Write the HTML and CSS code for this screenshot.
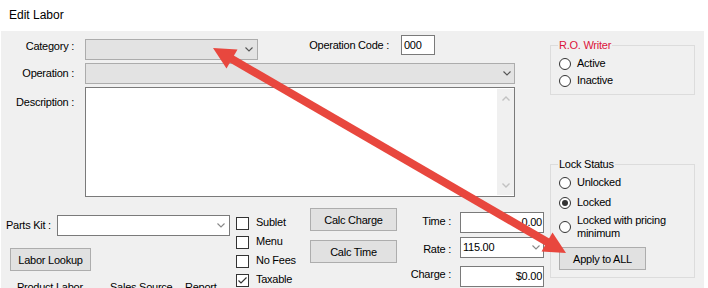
FILE: index.html
```html
<!DOCTYPE html>
<html>
<head>
<meta charset="utf-8">
<title>Edit Labor</title>
<link rel="stylesheet" href="styles.css">
</head>
<body>
<div class="window">
  <div class="title">Edit Labor</div>
  <div class="panel">
    <div class="main">
      <div class="row row-cat">
        <div class="lbl">Category :</div>
        <div class="combo disabled combo-cat"><svg class="chev" width="8" height="5" viewBox="0 0 8 5"><polyline points="0.5,0.5 4,4 7.5,0.5"/></svg></div>
        <div class="lbl-opcode">Operation Code :</div>
        <div class="input input-opcode">000</div>
      </div>
      <div class="row row-op">
        <div class="lbl">Operation :</div>
        <div class="combo disabled combo-op"><svg class="chev" width="8" height="5" viewBox="0 0 8 5"><polyline points="0.5,0.5 4,4 7.5,0.5"/></svg></div>
      </div>
      <div class="row row-desc">
        <div class="lbl">Description :</div>
        <div class="desc-box">
          <div class="vscroll">
            <svg class="schev" width="8" height="5" viewBox="0 0 8 5"><polyline points="0.5,4.5 4,1 7.5,4.5"/></svg>
            <svg class="schev" width="8" height="5" viewBox="0 0 8 5"><polyline points="0.5,0.5 4,4 7.5,0.5"/></svg>
          </div>
        </div>
      </div>
      <div class="bottom">
        <div class="col-a">
          <div class="parts-row">
            <div class="parts-lbl">Parts Kit :</div>
            <div class="combo combo-parts"><svg class="chev light" width="8" height="5" viewBox="0 0 8 5"><polyline points="0.5,0.5 4,4 7.5,0.5"/></svg></div>
          </div>
          <div class="btn btn-lookup">Labor Lookup</div>
          <div class="cut-text"><span class="cut1">Product Labor</span><span class="cut2">Sales Source</span><span>Report</span></div>
        </div>
        <div class="col-b">
          <div class="check"><div class="box"></div><span>Sublet</span></div>
          <div class="check"><div class="box"></div><span>Menu</span></div>
          <div class="check"><div class="box"></div><span>No Fees</span></div>
          <div class="check"><div class="box"><svg width="11" height="11" viewBox="0 0 11 11"><polyline points="1.5,5.5 4,8 9.5,2.5"/></svg></div><span>Taxable</span></div>
        </div>
        <div class="col-c">
          <div class="btn">Calc Charge</div>
          <div class="btn btn-time">Calc Time</div>
        </div>
        <div class="col-d">
          <div class="field f-time">
            <div class="field-lbl">Time :</div>
            <div class="input num">0.00</div>
          </div>
          <div class="field f-rate">
            <div class="field-lbl">Rate :</div>
            <div class="combo combo-rate"><span>115.00</span><svg class="chev light" width="8" height="5" viewBox="0 0 8 5"><polyline points="0.5,0.5 4,4 7.5,0.5"/></svg></div>
          </div>
          <div class="field f-charge">
            <div class="field-lbl">Charge :</div>
            <div class="input num">$0.00</div>
          </div>
        </div>
      </div>
    </div>
    <div class="side">
      <div class="group group-ro">
        <div class="legend red">R.O. Writer</div>
        <div class="radio-row first"><div class="radio"></div><span>Active</span></div>
        <div class="radio-row tight"><div class="radio"></div><span>Inactive</span></div>
      </div>
      <div class="group group-lock">
        <div class="legend">Lock Status</div>
        <div class="radio-row"><div class="radio"></div><span>Unlocked</span></div>
        <div class="radio-row"><div class="radio on"></div><span>Locked</span></div>
        <div class="radio-row multi"><div class="radio"></div><span class="wrap">Locked with pricing minimum</span></div>
        <div class="btn btn-apply">Apply to ALL</div>
      </div>
    </div>
  </div>
  <svg class="arrow" width="708" height="288" viewBox="0 0 708 288">
    <line x1="230" y1="58" x2="549" y2="243" stroke="#e8473e" stroke-width="8"/>
    <polygon points="213,48 226.5,68.6 237.5,49.5" fill="#e8473e"/>
    <polygon points="566,253 541.5,251.5 552.5,232.4" fill="#e8473e"/>
  </svg>
</div>
</body>
</html>
```

FILE: styles.css
```css
* { box-sizing: border-box; }
html, body { margin: 0; padding: 0; background: #fff; }
body {
  font-family: "Liberation Sans", Arial, sans-serif;
  font-size: 11px;
  letter-spacing: -0.25px;
  color: #000;
}
.window { position: relative; width: 708px; height: 288px; overflow: hidden; background: #fff; }
.title { height: 31px; line-height: 31px; padding-left: 9px; font-size: 12px; letter-spacing: 0; }
.panel {
  margin-left: 1px; width: 703px; height: 257px;
  background: #f0f0f0; display: flex; overflow: hidden;
}
.main { width: 549px; flex: none; }
.side { width: 146px; flex: none; }

.row { display: flex; align-items: flex-start; }
.lbl { width: 73px; margin-right: 11px; text-align: right; line-height: 13px; flex: none; white-space: nowrap; }
.row-cat { margin-top: 4px; height: 24px; }
.row-cat .lbl { margin-top: 5px; }
.row-op { margin-top: 4px; }
.row-op .lbl { margin-top: 4px; }
.row-desc { margin-top: 3px; }
.row-desc .lbl { margin-top: 9px; }

.combo {
  display: flex; align-items: center; justify-content: flex-end;
  border: 1px solid #7a7a7a; background: #fff;
  height: 21px; flex: none; padding-right: 4px;
}
.combo.disabled { background: #e3e3e3; border-color: #acacac; }
.combo-cat { margin-top: 4px; width: 173px; }
.combo-op { width: 430px; padding-right: 3px; }
.combo-parts { width: 173px; }
.combo-rate { width: 84px; justify-content: space-between; padding: 0 3px 0 2px; line-height: 19px; }
.chev { display: block; }
.chev polyline { fill: none; stroke: #555; stroke-width: 1.1; }
.chev.light polyline { stroke: #888; }

.lbl-opcode { width: 131px; margin-right: 12px; margin-top: 4px; text-align: right; line-height: 13px; white-space: nowrap; flex: none; }
.input {
  height: 21px; border: 1px solid #7a7a7a; background: #fff;
  line-height: 19px; padding: 0 2px; flex: none;
}
.input-opcode { width: 34px; height: 20px; line-height: 18px; }
.input.num { width: 84px; text-align: right; padding: 0 1px 0 2px; }

.desc-box {
  width: 430px; height: 110px; border: 1px solid #7a7a7a; background: #fff;
  display: flex; justify-content: flex-end; padding: 1px 0 1px 0; flex: none;
}
.vscroll {
  width: 17px; background: #f0f0f0;
  display: flex; flex-direction: column; justify-content: space-between; align-items: center;
  padding: 7px 0 7px;
}
.schev { display: block; }
.schev polyline { fill: none; stroke: #c2c2c2; stroke-width: 1.4; }

.bottom { display: flex; align-items: flex-start; margin-top: 11px; }
.col-a { width: 235px; flex: none; }
.col-b { width: 74px; flex: none; margin-top: 9px; }
.col-c { width: 87px; flex: none; }
.col-d { flex: none; margin-top: 4px; }

.parts-row { display: flex; align-items: flex-start; margin-top: 7px; }
.parts-lbl { width: 56px; padding-left: 5px; margin-top: 4px; line-height: 13px; white-space: nowrap; flex: none; }

.btn {
  height: 23px; width: 87px; background: #e1e1e1; border: 1px solid #adadad;
  display: flex; align-items: center; justify-content: center; white-space: nowrap;
}
.btn-lookup { margin: 12px 0 0 9px; width: 81px; }
.btn-time { margin-top: 9px; }
.btn-apply { margin: 7px 0 0 8px; }

.cut-text { margin-top: 10px; padding-left: 16px; line-height: 13px; white-space: nowrap; display: flex; }
.cut1 { width: 93px; }
.cut2 { width: 75px; }

.check { display: flex; align-items: flex-start; height: 13px; margin-bottom: 6px; }
.box {
  width: 13px; height: 13px; border: 1px solid #333; background: #fff; flex: none;
  display: flex; align-items: center; justify-content: center;
}
.box svg { display: block; }
.box polyline { fill: none; stroke: #333; stroke-width: 1.2; }
.check span { margin-left: 7px; line-height: 11px; white-space: nowrap; }

.field { display: flex; align-items: flex-start; }
.field-lbl { width: 54px; margin-right: 9px; text-align: right; line-height: 13px; flex: none; }
.f-time .field-lbl { margin-top: 3px; }
.f-rate { margin-top: 4px; }
.f-rate .field-lbl { margin-top: 6px; }
.f-charge { margin-top: 8px; }
.f-charge .field-lbl { margin-top: 2px; }

.group { border: 1px solid #dcdcdc; width: 145px; }
.group-ro { margin-top: 14px; height: 50px; }
.group-lock { margin-top: 69px; height: 114px; }
.legend {
  margin: -7px 0 0 7px; padding: 0 1px; background: #f0f0f0;
  width: fit-content; line-height: 13px; white-space: nowrap;
}
.legend.red { color: #dc143c; }
.radio-row { display: flex; align-items: center; height: 17px; margin-top: 3px; padding-left: 8px; }
.radio-row.tight { margin-top: 0; }
.radio-row span { margin-left: 6px; line-height: 13px; white-space: nowrap; }
.radio-row.multi { height: 26px; }
.radio-row span.wrap { white-space: normal; width: 110px; }
.radio {
  width: 12px; height: 12px; border: 1px solid #333; border-radius: 50%; background: #fff; flex: none;
  display: flex; align-items: center; justify-content: center;
}
.radio.on::after { content: ""; width: 6px; height: 6px; border-radius: 50%; background: #333; }

.arrow { position: absolute; left: 0; top: 0; pointer-events: none; }
```
